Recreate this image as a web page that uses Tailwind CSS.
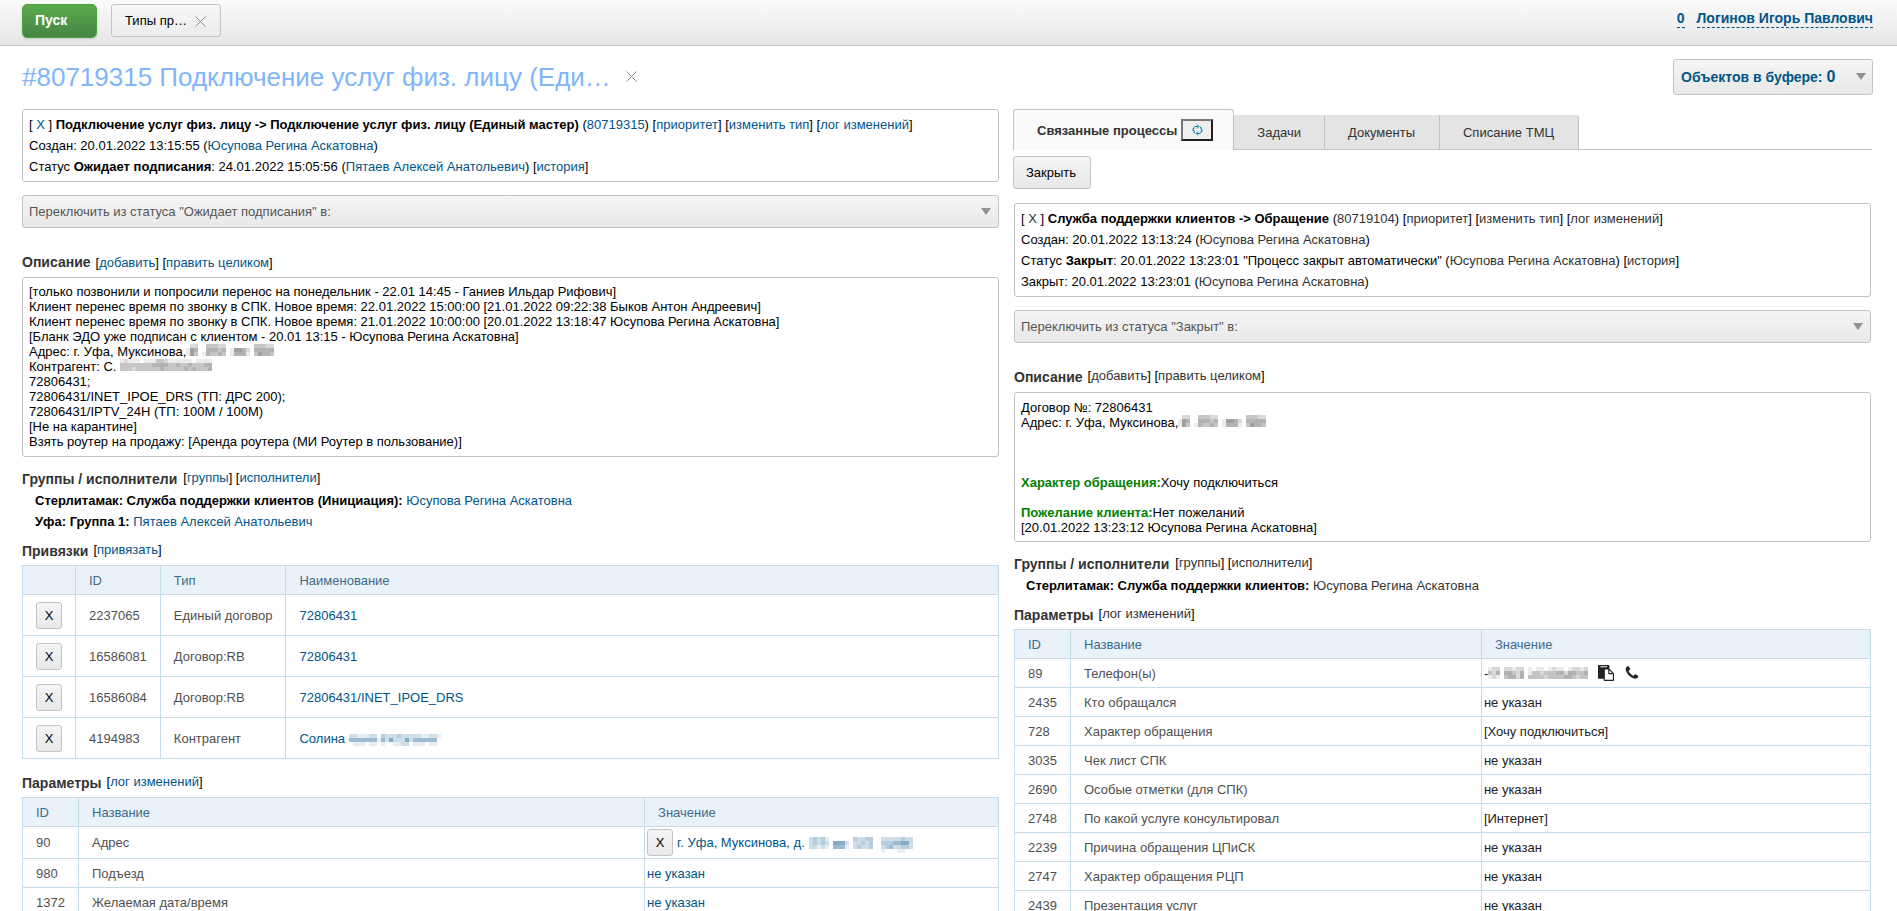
<!DOCTYPE html>
<html lang="ru">
<head>
  <meta charset="UTF-8">
  <meta name="viewport" content="width=device-width, initial-scale=1.0">
  <title>#80719315 Подключение услуг физ. лицу</title>
  <script src="https://cdn.jsdelivr.net/npm/@tailwindcss/browser@4"></script>
</head>
<body class="bg-white font-['Liberation_Sans',Arial,sans-serif] text-[13px] leading-[15px] text-black">
<div class="h-screen overflow-hidden">

  <!-- Top bar -->
  <header class="flex items-start justify-between h-[46px] pt-1 pl-[22px] pr-6 border-b border-[#c3c3c3] bg-gradient-to-b from-[#fbfbfb] via-[#f0f0f0] to-[#e6e6e6]">
    <div class="flex items-start gap-[14px]">
      <button class="w-[75px] h-[34px] pl-3 pb-[2px] text-left text-sm font-bold text-white rounded-[5px] border border-[#4aa23f] bg-gradient-to-b from-[#5bab4c] to-[#468545] shadow">Пуск</button>
      <div class="flex items-center gap-2 h-[33px] pl-[13px] pr-[14px] rounded-[3px] border border-[#c3c3c3] bg-gradient-to-b from-[#f7f7f7] to-[#ececec]">
        <a href="#">Типы пр…</a>
        <button aria-label="Закрыть вкладку" class="pt-px">
          <svg class="w-[11px] h-[11px]" viewBox="0 0 11 11" fill="none" stroke="#8c8c8c"><path d="M.5.5l10 10M10.5.5l-10 10"/></svg>
        </button>
      </div>
    </div>
    <div class="flex gap-3 pt-[6px] text-sm font-bold text-[#005589]">
      <a href="#" class="border-b border-dashed border-[#005589] leading-[17px]">0</a>
      <a href="#" class="border-b border-dashed border-[#005589] leading-[17px]">Логинов Игорь Павлович</a>
    </div>
  </header>

  <!-- Title -->
  <div class="flex items-center justify-between h-[61px] mb-[2px] pl-[22px] pr-6">
    <div class="flex items-center gap-[15px]">
      <h1 class="text-[26px] leading-[30px] text-[#80b5fc]">#80719315 Подключение услуг физ. лицу (Еди…</h1>
      <button aria-label="Закрыть">
        <svg class="w-[11px] h-[11px]" viewBox="0 0 11 11" fill="none" stroke="#8c8c8c"><path d="M.5.5l10 10M10.5.5l-10 10"/></svg>
      </button>
    </div>
    <button class="flex items-center justify-between w-[200px] h-9 pl-[7px] pr-[6px] rounded-[3px] border border-[#c3c3c3] bg-gradient-to-b from-[#f5f5f5] to-[#e8e8e8] text-sm font-bold text-[#005589]">
      <span>Объектов в буфере: <span class="text-base">0</span></span>
      <svg class="w-[10px] h-[7px]" viewBox="0 0 10 7" fill="#919191"><path d="M0 0h10L5 7z"/></svg>
    </button>
  </div>

  <div class="grid grid-cols-[977fr_859fr] gap-[14px] pl-[22px] pr-[25px] items-start">

    <!-- Process -->
    <main>
      <div class="px-[6px] py-1 border border-[#c3c3c3] rounded-[3px] leading-[21px]">
        <div>[ <a href="#" class="text-[#005589]">X</a> ] <b>Подключение услуг физ. лицу -&gt; Подключение услуг физ. лицу (Единый мастер)</b> (<a href="#" class="text-[#005589]">80719315</a>) [<a href="#" class="text-[#005589]">приоритет</a>] [<a href="#" class="text-[#005589]">изменить тип</a>] [<a href="#" class="text-[#005589]">лог изменений</a>]</div>
        <div>Создан: 20.01.2022 13:15:55 (<a href="#" class="text-[#005589]">Юсупова Регина Аскатовна</a>)</div>
        <div>Статус <b>Ожидает подписания</b>: 24.01.2022 15:05:56 (<a href="#" class="text-[#005589]">Пятаев Алексей Анатольевич</a>) [<a href="#" class="text-[#005589]">история</a>]</div>
      </div>

      <div class="relative mt-[13px]">
        <select aria-label="Статус процесса" class="block appearance-none w-full h-[33px] px-[6px] rounded-[3px] border border-[#c3c3c3] bg-gradient-to-b from-[#f5f5f5] to-[#e8e8e8] text-[#555]">
          <option>Переключить из статуса "Ожидает подписания" в:</option>
        </select>
        <svg class="absolute right-2 top-[13px] w-[10px] h-[7px] pointer-events-none" viewBox="0 0 10 7" fill="#919191"><path d="M0 0h10L5 7z"/></svg>
      </div>

      <div class="flex items-baseline gap-[5px] h-[18px] mt-[25px] mb-[6px]">
        <h2 class="text-sm leading-[18px] font-bold text-[#333]">Описание</h2>
        <span>[<a href="#" class="text-[#005589]">добавить</a>] [<a href="#" class="text-[#005589]">править целиком</a>]</span>
      </div>
      <div class="px-[6px] pt-[6px] pb-[7px] border border-[#c3c3c3] rounded-[3px]">
        <p>[только позвонили и попросили перенос на понедельник - 22.01 14:45 - Ганиев Ильдар Рифович]</p>
        <p>Клиент перенес время по звонку в СПК. Новое время: 22.01.2022 15:00:00 [21.01.2022 09:22:38 Быков Антон Андреевич]</p>
        <p>Клиент перенес время по звонку в СПК. Новое время: 21.01.2022 10:00:00 [20.01.2022 13:18:47 Юсупова Регина Аскатовна]</p>
        <p>[Бланк ЭДО уже подписан с клиентом - 20.01 13:15 - Юсупова Регина Аскатовна]</p>
        <p class="flex items-start">Адрес: г. Уфа, Муксинова,<svg class="h-3" data-color="#55504f" data-rows="0220033322000000033322/1540044434015542044444/1530143343014441035443"></svg></p>
        <p class="flex items-start">Контрагент: С.<svg class="ml-1 h-3" data-color="#55504f" data-rows="12111011133211111101111/33333333444433433433344/33323333334333334343334"></svg></p>
        <p>72806431;</p>
        <p>72806431/INET_IPOE_DRS (ТП: ДРС 200);</p>
        <p>72806431/IPTV_24H (ТП: 100M / 100M)</p>
        <p>[Не на карантине]</p>
        <p>Взять роутер на продажу: [Аренда роутера (МИ Роутер в пользование)]</p>
      </div>

      <div class="flex items-start gap-[6px] mt-[13px] mb-[2px]">
        <h2 class="text-sm leading-[18px] font-bold text-[#333]">Группы / исполнители</h2>
        <span>[<a href="#" class="text-[#005589]">группы</a>] [<a href="#" class="text-[#005589]">исполнители</a>]</span>
      </div>
      <div class="pl-[13px] leading-[21px]">
        <div><b>Стерлитамак: Служба поддержки клиентов (Инициация):</b> <a href="#" class="text-[#005589]">Юсупова Регина Аскатовна</a></div>
        <div><b>Уфа: Группа 1:</b> <a href="#" class="text-[#005589]">Пятаев Алексей Анатольевич</a></div>
      </div>

      <div class="flex items-start gap-[5px] mt-[10px] mb-[5px]">
        <h2 class="text-sm leading-[18px] font-bold text-[#333]">Привязки</h2>
        <span>[<a href="#" class="text-[#005589]">привязать</a>]</span>
      </div>
      <table class="w-full border-collapse text-left whitespace-nowrap text-[#505050] [&_th]:border [&_td]:border [&_th]:border-[#c6dce9] [&_td]:border-[#c6dce9] [&_th]:px-[13px] [&_td]:px-[13px] [&_th]:font-normal">
        <tr class="h-[29px] bg-[#e9f2fa] text-[#3f6a89]"><th></th><th>ID</th><th>Тип</th><th class="w-full">Наименование</th></tr>
        <tr class="h-[41px]">
          <td><button class="block w-[26px] h-[27px] rounded-[3px] border border-[#c3c3c3] bg-gradient-to-b from-[#f5f5f5] to-[#e8e8e8] text-black">X</button></td>
          <td>2237065</td><td>Единый договор</td><td><a href="#" class="text-[#005589]">72806431</a></td>
        </tr>
        <tr class="h-[41px]">
          <td><button class="block w-[26px] h-[27px] rounded-[3px] border border-[#c3c3c3] bg-gradient-to-b from-[#f5f5f5] to-[#e8e8e8] text-black">X</button></td>
          <td>16586081</td><td>Договор:RB</td><td><a href="#" class="text-[#005589]">72806431</a></td>
        </tr>
        <tr class="h-[41px]">
          <td><button class="block w-[26px] h-[27px] rounded-[3px] border border-[#c3c3c3] bg-gradient-to-b from-[#f5f5f5] to-[#e8e8e8] text-black">X</button></td>
          <td>16586084</td><td>Договор:RB</td><td><a href="#" class="text-[#005589]">72806431/INET_IPOE_DRS</a></td>
        </tr>
        <tr class="h-[41px]">
          <td><button class="block w-[26px] h-[27px] rounded-[3px] border border-[#c3c3c3] bg-gradient-to-b from-[#f5f5f5] to-[#e8e8e8] text-black">X</button></td>
          <td>4194983</td><td>Контрагент</td><td><a href="#" class="flex items-center text-[#005589]">Солина<svg class="ml-1 mt-1 h-3" data-color="#1f6797" data-rows="22111220322232222211221/44444441425222524444440/01110110100112201110110"></svg></a></td>
        </tr>
      </table>

      <div class="flex items-start gap-[5px] mt-[15px] mb-[5px]">
        <h2 class="text-sm leading-[18px] font-bold text-[#333]">Параметры</h2>
        <span>[<a href="#" class="text-[#005589]">лог изменений</a>]</span>
      </div>
      <table class="w-full border-collapse text-left whitespace-nowrap text-[#505050] [&_th]:border [&_td]:border [&_th]:border-[#c6dce9] [&_td]:border-[#c6dce9] [&_th]:px-[13px] [&_td]:pl-[13px] [&_th]:font-normal">
        <tr class="h-[29px] bg-[#e9f2fa] text-[#3f6a89]"><th class="w-[56px]">ID</th><th class="w-[58%]">Название</th><th>Значение</th></tr>
        <tr class="h-8">
          <td>90</td><td>Адрес</td>
          <td class="!pl-[2px]">
            <div class="flex items-center gap-1">
              <button class="w-[26px] h-[27px] rounded-[3px] border border-[#c3c3c3] bg-gradient-to-b from-[#f5f5f5] to-[#e8e8e8] text-black">X</button>
              <a href="#" class="flex items-center text-[#005589]">г. Уфа, Муксинова, д.<svg class="ml-1 mt-1 h-4" data-color="#1f6797" data-rows="23231000000322330022222322/23232055520223230033344552/22121044410232230023422332/00000000000000000010001100"></svg></a>
            </div>
          </td>
        </tr>
        <tr class="h-[29px]"><td>980</td><td>Подъезд</td><td class="!pl-[2px]"><a href="#" class="text-[#005589]">не указан</a></td></tr>
        <tr class="h-[29px]"><td>1372</td><td>Желаемая дата/время</td><td class="!pl-[2px]"><a href="#" class="text-[#005589]">не указан</a></td></tr>
      </table>
    </main>

    <!-- Linked processes -->
    <aside>
      <nav class="flex items-end h-[41px] text-[#333]">
        <div class="flex items-center gap-1 h-[41px] pl-[23px] pr-5 border border-b-0 border-[#c3c3c3] rounded-t-[3px] bg-[#fafafa]">
          <a href="#" class="font-bold">Связанные процессы</a>
          <button aria-label="Обновить" class="flex items-center justify-center w-8 h-[22px] border-2 border-t-[#767676] border-l-[#767676] border-b-[#212121] border-r-[#212121] bg-[#efefef]">
            <svg class="w-[11px] h-[12px]" viewBox="0 0 11 12" fill="none" stroke="#0078ae"><path d="M3 8.5H2V6.5H1V4.5H2V3.5L3 2.500H6M5 .5l2 2-2 2M8 3.500H9V5.500H10V7.500H9V8.500L8 9.500H5M6 7.500l-2 2 2 2"/></svg>
          </button>
        </div>
        <div class="flex flex-1 items-end border-b border-[#c3c3c3]">
          <a href="#" class="flex items-center h-[34px] px-[23px] border-r border-[#c3c3c3] bg-[#e4e4e4]">Задачи</a>
          <a href="#" class="flex items-center h-[34px] pl-[23px] pr-6 border-r border-[#c3c3c3] bg-[#e4e4e4]">Документы</a>
          <a href="#" class="flex items-center h-[34px] pl-[23px] pr-6 border-r border-[#c3c3c3] rounded-tr-[3px] bg-[#e4e4e4]">Списание ТМЦ</a>
        </div>
      </nav>
      <button class="block mt-[6px] h-[33px] pl-3 pr-[14px] rounded-[3px] border border-[#c3c3c3] bg-gradient-to-b from-[#f5f5f5] to-[#e8e8e8]">Закрыть</button>

      <div class="px-px">
        <div class="mt-[14px] px-[6px] py-1 border border-[#c3c3c3] rounded-[3px] leading-[21px]">
          <div>[ <a href="#" class="text-[#333]">X</a> ] <b>Служба поддержки клиентов -&gt; Обращение</b> (<a href="#" class="text-[#333]">80719104</a>) [<a href="#" class="text-[#333]">приоритет</a>] [<a href="#" class="text-[#333]">изменить тип</a>] [<a href="#" class="text-[#333]">лог изменений</a>]</div>
          <div>Создан: 20.01.2022 13:13:24 (<a href="#" class="text-[#333]">Юсупова Регина Аскатовна</a>)</div>
          <div>Статус <b>Закрыт</b>: 20.01.2022 13:23:01 "Процесс закрыт автоматически" (<a href="#" class="text-[#333]">Юсупова Регина Аскатовна</a>) [<a href="#" class="text-[#333]">история</a>]</div>
          <div>Закрыт: 20.01.2022 13:23:01 (<a href="#" class="text-[#333]">Юсупова Регина Аскатовна</a>)</div>
        </div>

        <div class="relative mt-[13px]">
          <select aria-label="Статус связанного процесса" class="block appearance-none w-full h-[33px] px-[6px] rounded-[3px] border border-[#c3c3c3] bg-gradient-to-b from-[#f5f5f5] to-[#e8e8e8] text-[#555]">
            <option>Переключить из статуса "Закрыт" в:</option>
          </select>
          <svg class="absolute right-2 top-[13px] w-[10px] h-[7px] pointer-events-none" viewBox="0 0 10 7" fill="#919191"><path d="M0 0h10L5 7z"/></svg>
        </div>

        <div class="flex items-start gap-[5px] mt-[25px] mb-[6px]">
          <h2 class="text-sm leading-[18px] font-bold text-[#333]">Описание</h2>
          <span>[<a href="#" class="text-[#333]">добавить</a>] [<a href="#" class="text-[#333]">править целиком</a>]</span>
        </div>
        <div class="px-[6px] pt-[7px] pb-[6px] border border-[#c3c3c3] rounded-[3px]">
          <p>Договор №: 72806431</p>
          <p class="flex items-start">Адрес: г. Уфа, Муксинова,<svg class="h-3" data-color="#55504f" data-rows="0220033322000000033322/1540044434015542044444/1530143343014441035443"></svg></p>
          <p class="mt-[45px]"><b class="text-[#008000]">Характер обращения:</b>Хочу подключиться</p>
          <p class="mt-[15px]"><b class="text-[#008000]">Пожелание клиента:</b>Нет пожеланий</p>
          <p>[20.01.2022 13:23:12 Юсупова Регина Аскатовна]</p>
        </div>

        <div class="flex items-start gap-[6px] mt-[13px] mb-[2px]">
          <h2 class="text-sm leading-[18px] font-bold text-[#333]">Группы / исполнители</h2>
          <span>[<a href="#" class="text-[#333]">группы</a>] [<a href="#" class="text-[#333]">исполнители</a>]</span>
        </div>
        <div class="pl-3 leading-[21px]">
          <b>Стерлитамак: Служба поддержки клиентов:</b> <a href="#" class="text-[#333]">Юсупова Регина Аскатовна</a>
        </div>

        <div class="flex items-start gap-[5px] mt-[10px] mb-[5px]">
          <h2 class="text-sm leading-[18px] font-bold text-[#333]">Параметры</h2>
          <span>[<a href="#" class="text-[#333]">лог изменений</a>]</span>
        </div>
        <table class="w-full border-collapse text-left whitespace-nowrap text-[#505050] [&_th]:border [&_td]:border [&_th]:border-[#c6dce9] [&_td]:border-[#c6dce9] [&_th]:px-[13px] [&_td]:pl-[13px] [&_th]:font-normal">
          <tr class="h-[29px] bg-[#e9f2fa] text-[#3f6a89]"><th class="w-[56px]">ID</th><th class="w-[48%]">Название</th><th>Значение</th></tr>
          <tr class="h-[29px]">
            <td>89</td><td>Телефон(ы)</td>
            <td class="!pl-[2px]">
              <div class="flex items-center text-[#222]">
                <span>-</span><svg class="h-3" data-color="#504c4c" data-rows="1220221220101101211012212/3240443240133233344244334/1210344240333323333443233"></svg>
                <button aria-label="Скопировать" class="ml-[10px]">
                  <svg class="w-4 h-4" viewBox="0 0 1792 1792" fill="#222"><path d="M768 1664h896v-640h-416q-40 0-68-28t-28-68v-416h-384v1152zm256-1440v-64q0-13-9.500-22.500t-22.500-9.500h-704q-13 0-22.500 9.500t-9.500 22.500v64q0 13 9.500 22.500t22.500 9.500h704q13 0 22.500-9.500t9.500-22.500zm256 672h299l-299-299v299zm512 128v672q0 40-28 68t-68 28h-960q-40 0-68-28t-28-68v-160h-544q-40 0-68-28t-28-68v-1344q0-40 28-68t68-28h1088q40 0 68 28t28 68v328q21 13 36 28l408 408q28 28 48 76t20 88z"/></svg>
                </button>
                <button aria-label="Позвонить" class="ml-[10px]">
                  <svg class="w-4 h-4" viewBox="0 0 1792 1792" fill="#222"><path d="M1600 1240q0 27-10 70.500t-21 68.500q-21 50-122 106-94 51-186 51-27 0-53-3.500t-57.500-12.500-47-14.500-55.500-20.500-49-18q-98-35-175-83-127-79-264-216t-216-264q-48-77-83-175-3-9-18-49t-20.500-55.500-14.500-47-12.500-57.500-3.500-53q0-92 51-186 56-101 106-122 25-11 68.500-21t70.500-10q14 0 21 3 18 6 53 76 11 19 30 54t35 63.500 31 53.500q3 4 17.500 25t21.500 35.500 7 28.500q0 20-28.500 50t-62 55-62 53-28.500 46q0 9 5 22.500t8.500 20.500 14 24 11.500 19q76 137 174 235t235 174q2 1 19 11.500t24 14 20.500 8.500 22.500 5q18 0 46-28.500t53-62 55-62 50-28.500q14 0 28.500 7t35.500 21.500 25 17.500q25 15 53.500 31t63.500 35 54 30q70 35 76 53 3 7 3 21z"/></svg>
                </button>
              </div>
            </td>
          </tr>
          <tr class="h-[29px]"><td>2435</td><td>Кто обращался</td><td class="!pl-[2px]"><a href="#" class="text-[#222]">не указан</a></td></tr>
          <tr class="h-[29px]"><td>728</td><td>Характер обращения</td><td class="!pl-[2px]"><a href="#" class="text-[#222]">[Хочу подключиться]</a></td></tr>
          <tr class="h-[29px]"><td>3035</td><td>Чек лист СПК</td><td class="!pl-[2px]"><a href="#" class="text-[#222]">не указан</a></td></tr>
          <tr class="h-[29px]"><td>2690</td><td>Особые отметки (для СПК)</td><td class="!pl-[2px]"><a href="#" class="text-[#222]">не указан</a></td></tr>
          <tr class="h-[29px]"><td>2748</td><td>По какой услуге консультировал</td><td class="!pl-[2px]"><a href="#" class="text-[#222]">[Интернет]</a></td></tr>
          <tr class="h-[29px]"><td>2239</td><td>Причина обращения ЦПиСК</td><td class="!pl-[2px]"><a href="#" class="text-[#222]">не указан</a></td></tr>
          <tr class="h-[29px]"><td>2747</td><td>Характер обращения РЦП</td><td class="!pl-[2px]"><a href="#" class="text-[#222]">не указан</a></td></tr>
          <tr class="h-[29px]"><td>2439</td><td>Презентация услуг</td><td class="!pl-[2px]"><a href="#" class="text-[#222]">не указан</a></td></tr>
        </table>
      </div>
    </aside>
  </div>
</div>

<script>
  // hidden personal data: each digit is the density of one 4px square
  document.querySelectorAll('svg[data-rows]').forEach(svg => {
    const rows = svg.dataset.rows.split('/');
    const w = rows[0].length * 4, h = rows.length * 4;
    svg.setAttribute('width', w);
    svg.setAttribute('viewBox', `0 0 ${w} ${h}`);
    svg.setAttribute('shape-rendering', 'crispEdges');
    svg.innerHTML = rows.map((row, y) => [...row].map((d, x) =>
      d === '0' ? '' : `<rect x="${x * 4}" y="${y * 4}" width="4" height="4" fill="${svg.dataset.color}" fill-opacity="${d * 0.11}"/>`
    ).join('')).join('');
  });
</script>
</body>
</html>
